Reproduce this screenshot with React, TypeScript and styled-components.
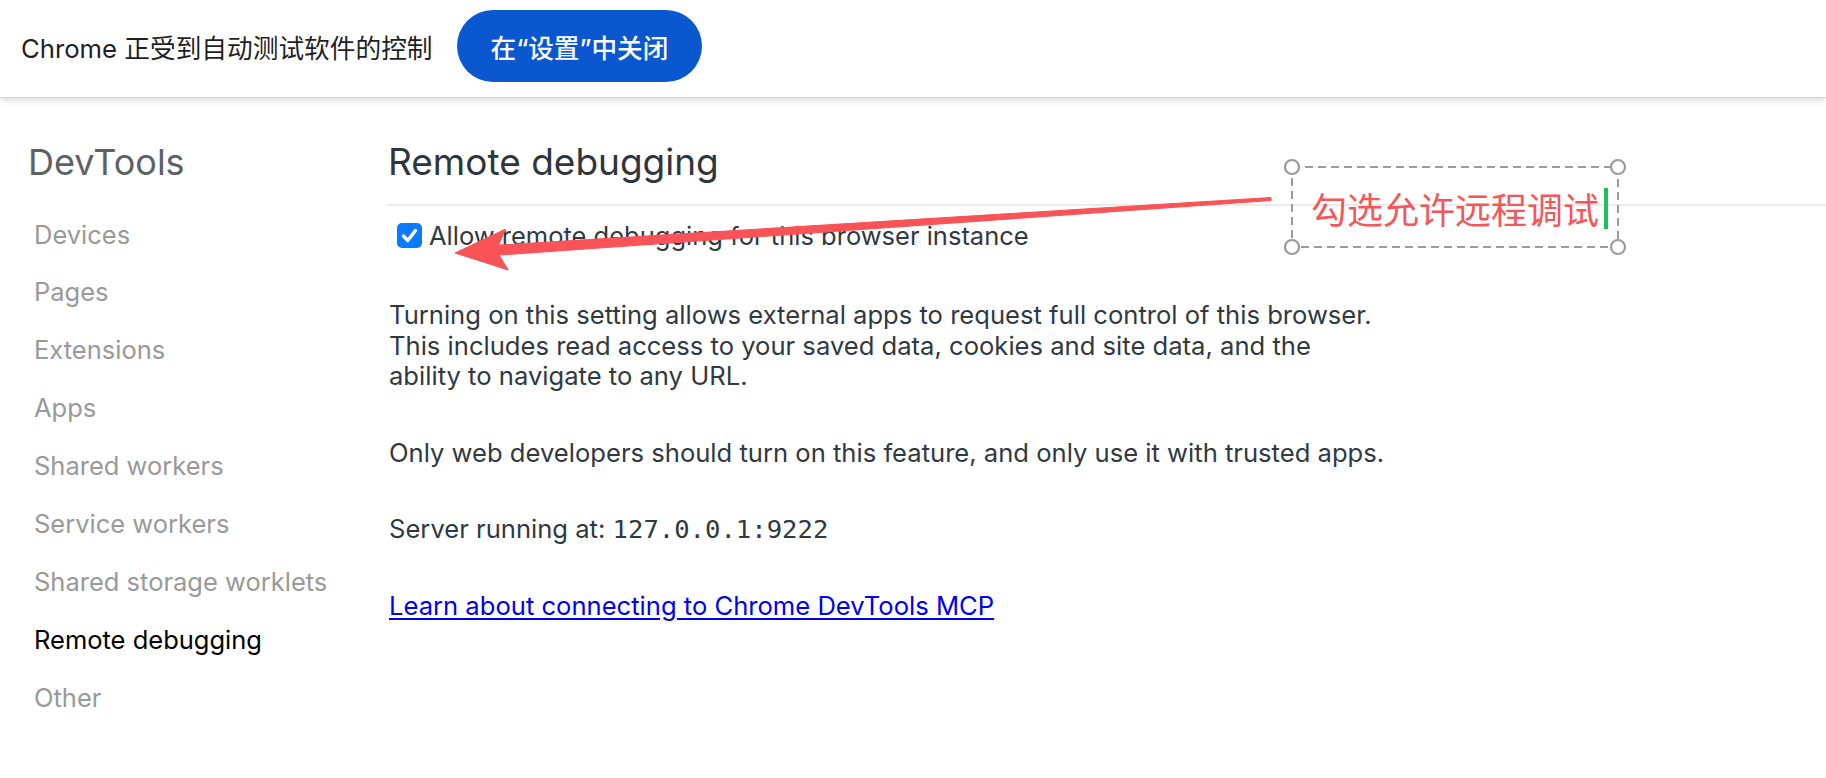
import React from "react";
import styled, { createGlobalStyle } from "styled-components";

const Global = createGlobalStyle`
  html, body { margin: 0; padding: 0; background: #ffffff; }
  body { font-family: Inter, "Noto Sans CJK SC", sans-serif; }
  * { box-sizing: border-box; }
`;

const Page = styled.div`
  position: relative;
  width: 1826px;
  height: 778px;
  overflow: hidden;
  background: #ffffff;
`;

const InfoBar = styled.div`
  position: relative;
  z-index: 1;
  height: 98px;
  padding: 0 0 5px 21px;
  display: flex;
  align-items: center;
  gap: 24px;
  background: #ffffff;
  border-bottom: 1px solid #d6d6d6;
  box-shadow: 0 2px 7px rgba(0, 0, 0, 0.17);
`;

const InfoText = styled.span`
  font-family: Inter, "Noto Sans CJK SC", sans-serif;
  font-size: 25.7px;
  color: #1f1f1f;
`;

const InfoButton = styled.button`
  height: 72px;
  padding: 0 34px;
  border: none;
  border-radius: 36px;
  background: #0b57d0;
  color: #ffffff;
  font-family: Inter, "Noto Sans CJK SC", sans-serif;
  font-size: 25.6px;
  font-weight: 500;
`;

const Body = styled.div`
  display: flex;
`;

const Sidebar = styled.nav`
  width: 389px;
  flex: none;
  padding: 42px 0 0 28px;
`;

const SideTitle = styled.div`
  font-size: 36px;
  line-height: 44px;
  color: #5c6166;
`;

const NavList = styled.ul`
  list-style: none;
  margin: 21.5px 0 0;
  padding: 0 0 0 6px;
`;

const NavItem = styled.li<{ $active?: boolean }>`
  font-size: 25.5px;
  line-height: 57.9px;
  color: ${(p) => (p.$active ? "#000000" : "#999999")};
`;

const Main = styled.main`
  flex: 1;
  padding-top: 42px;
  color: #303942;
`;

const Heading = styled.h1`
  margin: 0 0 0 -1px;
  font-size: 37px;
  line-height: 44px;
  font-weight: 400;
  color: #2f353c;
  padding-bottom: 20px;
  border-bottom: 2px solid #ebebeb;
`;

const CheckRow = styled.label`
  display: flex;
  align-items: center;
  gap: 7px;
  height: 30px;
  margin: 14px 0 0 8px;
  font-size: 25.5px;
`;

const CheckBox = styled.span`
  width: 25px;
  height: 25px;
  border-radius: 5px;
  background: #0a7aff;
  display: flex;
  align-items: center;
  justify-content: center;
`;

const Para = styled.p`
  margin: 46px 0 0;
  font-size: 25.6px;
  line-height: 30.5px;
  &:first-of-type { margin-top: 50px; }
`;

const Mono = styled.span`
  font-family: "DejaVu Sans Mono", "Liberation Mono", monospace;
  font-size: 25.6px;
  line-height: 1;
`;

const Link = styled.a`
  color: #0000ee;
  text-decoration: underline;
  text-underline-offset: 3px;
`;

const Overlay = styled.svg`
  position: absolute;
  left: 0;
  top: 0;
  pointer-events: none;
`;

const NoteLabel = styled.div`
  position: absolute;
  left: 1311px;
  top: 186px;
  height: 44px;
  display: flex;
  align-items: center;
  font-family: "Noto Sans CJK SC", sans-serif;
  font-size: 36px;
  color: #f4565a;
`;

const Caret = styled.span`
  width: 4px;
  height: 41px;
  margin-left: 5px;
  background: #1fbf5c;
`;

const navItems = [
  "Devices",
  "Pages",
  "Extensions",
  "Apps",
  "Shared workers",
  "Service workers",
  "Shared storage worklets",
  "Remote debugging",
  "Other",
];

export default function App() {
  return (
    <Page>
      <Global />
      <InfoBar>
        <InfoText>Chrome 正受到自动测试软件的控制</InfoText>
        <InfoButton>在“设置”中关闭</InfoButton>
      </InfoBar>
      <Body>
        <Sidebar>
          <SideTitle>DevTools</SideTitle>
          <NavList>
            {navItems.map((n) => (
              <NavItem key={n} $active={n === "Remote debugging"}>
                {n}
              </NavItem>
            ))}
          </NavList>
        </Sidebar>
        <Main>
          <Heading>Remote debugging</Heading>
          <CheckRow>
            <CheckBox>
              <svg width="25" height="25" viewBox="0 0 25 25">
                <path
                  d="M6.5 13 L10.8 17.5 L18.5 7.5"
                  fill="none"
                  stroke="#fff"
                  strokeWidth="3.4"
                  strokeLinecap="round"
                  strokeLinejoin="round"
                />
              </svg>
            </CheckBox>
            Allow remote debugging for this browser instance
          </CheckRow>
          <Para>
            Turning on this setting allows external apps to request full control of this browser.
            <br />
            This includes read access to your saved data, cookies and site data, and the
            <br />
            ability to navigate to any URL.
          </Para>
          <Para>Only web developers should turn on this feature, and only use it with trusted apps.</Para>
          <Para>
            Server running at: <Mono>127.0.0.1:9222</Mono>
          </Para>
          <Para>
            <Link href="#">Learn about connecting to Chrome DevTools MCP</Link>
          </Para>
        </Main>
      </Body>
      <Overlay width="1826" height="778" viewBox="0 0 1826 778">
        <rect x="1292" y="167" width="326" height="80" fill="none" stroke="#9b9b9b" strokeWidth="2" strokeDasharray="8 5" />
        {[
          [1292, 167],
          [1618, 167],
          [1292, 247],
          [1618, 247],
        ].map(([cx, cy]) => (
          <circle key={`${cx}-${cy}`} cx={cx} cy={cy} r="7" fill="#fff" stroke="#9b9b9b" strokeWidth="2.2" />
        ))}
        <polygon
          points="455,253 505.5,229.1 498.6,245.1 1270.9,197.5 1271.1,200.5 499.2,255.1 508.2,270"
          fill="#f85356"
          stroke="#f85356"
          strokeWidth="1"
          strokeLinejoin="round"
        />
      </Overlay>
      <NoteLabel>
        勾选允许远程调试
        <Caret />
      </NoteLabel>
    </Page>
  );
}
